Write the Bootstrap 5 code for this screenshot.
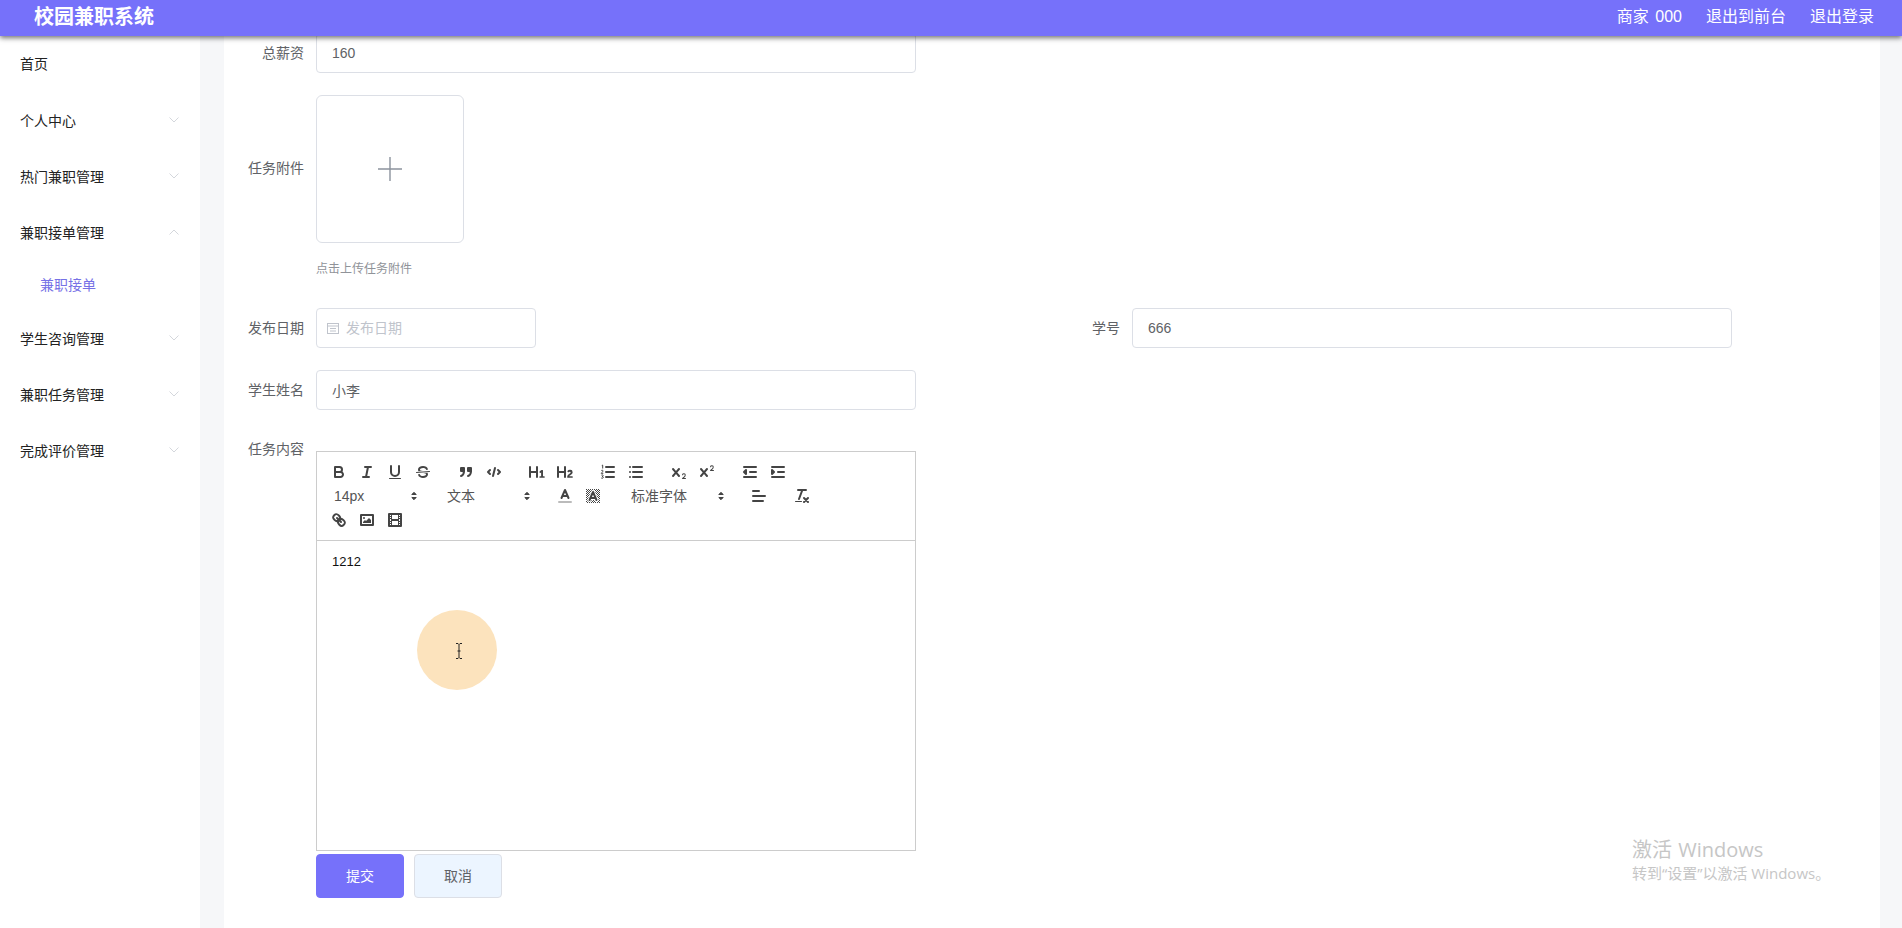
<!DOCTYPE html>
<html lang="zh">
<head>
<meta charset="utf-8">
<title>校园兼职系统</title>
<link href="https://cdn.jsdelivr.net/npm/bootstrap@5.3.0/dist/css/bootstrap.min.css" rel="stylesheet">
<style>
html,body{height:100%;overflow:hidden}
body{font-family:"Liberation Sans","Noto Sans CJK SC",sans-serif;background:#f6f7f9;color:#606266;font-size:14px}
.top-bar{height:36px;background:#7671fa;color:#fff;box-shadow:0 2px 5px rgba(0,0,0,.55);position:relative;z-index:5;padding:0 28px 2px 34px}
.brand-name{font-size:20px;font-weight:700;line-height:1}
.top-links{font-size:16px;gap:24px;line-height:1}
.top-user{word-spacing:2px}
.shell{height:892px}
.side-menu{width:200px;background:#fff;color:#222}
.menu-item{height:56px;padding:1px 0 0 20px;color:#222;font-size:14px}
.menu-home{height:57px;padding-bottom:1px}
.menu-sub{height:50px;padding:0 0 1px 40px;color:#7671e6;font-size:14px}
.menu-chev{width:10px;height:6px;margin:-4px 21px 0 0;fill:none;stroke:#d4d7dc;stroke-width:1}
.work-area{width:1702px;padding:0 22px 0 24px}
.sheet{background:#fff;height:100%;padding:0 12px;overflow:hidden}
.form-stack{margin-top:-3px}
.field{display:flex}
.field-label{width:80px;padding-right:12px;text-align:right;line-height:40px;flex:none;color:#606266;font-size:14px}
.label-tall{line-height:147px}
.field-input.form-control{width:600px;height:40px;border:1px solid #dcdfe6;border-radius:4px;padding:0 15px;font-size:14px;color:#606266;box-shadow:none}
.field-date{width:220px;height:40px;border:1px solid #dcdfe6;border-radius:4px;padding-left:10px;color:#c0c4cc;gap:7px}
.upload-box{width:148px;height:148px;border:1px solid #dcdfe6;border-radius:6px}
.upload-hint{font-size:12px;color:#909399;margin:18px 0 0;line-height:17px}
.gap-up{margin-top:22px}
.gap-date{margin-top:30px}
.gap-name{margin-top:22px}
.gap-ed{margin-top:19px}
.ed-wrap{width:600px;margin-top:22px}
.ed-tools{border:1px solid #ccc;padding:8px;height:90px;display:flex;flex-wrap:wrap;align-content:flex-start}
.ed-group{display:flex;margin-right:15px}
.ed-btn{width:28px;height:24px;padding:3px 5px;display:block;fill:none;stroke:#444;stroke-width:2;stroke-linecap:round;stroke-linejoin:round}
.ed-btn .fl{fill:#444;stroke:none}
.ed-btn .fb{fill:#444}
.ed-btn .th{stroke-width:1}
.ed-btn .halo{stroke:#fff;stroke-width:4}
.ed-pick{height:24px;display:flex;align-items:center;padding-left:9px;justify-content:space-between;color:#555;font-size:14px;font-weight:400;margin-right:15px}
.pick-s{width:98px}
.pick-f{width:108px}
.ed-arrow{width:18px;height:18px;fill:#444;stroke:#444;stroke-width:1;stroke-linejoin:round}
.ed-body{border:1px solid #ccc;border-top:0;height:310px;padding:12px 15px;color:#111;font-size:13px;line-height:18px}
.act-row{margin-left:80px;gap:10px;margin-top:3px}
.act-btn{width:88px;height:44px;border-radius:4px;font-size:14px;padding:0;line-height:42px}
.act-go,.act-go:hover{background:#7671fa;border:1px solid #7671fa;color:#fff}
.act-no,.act-no:hover{background:#ecf5ff;border:1px solid #dcdfe6;color:#606266}
.cursor-halo{position:absolute;left:417px;top:610px;width:80px;height:80px;border-radius:50%;background:#fce3bd;z-index:6}
.cursor-beam{position:absolute;left:455px;top:643px;z-index:7}
.win-mark{position:absolute;left:1632px;top:838px;color:#c6c6c6;z-index:6;font-family:"Open Sans","Noto Sans CJK SC",sans-serif}
.win-a{font-size:20px;line-height:24px;word-spacing:1px}
.win-b{font-size:15px;line-height:22px}
</style>
</head>
<body>
<header class="top-bar d-flex align-items-center justify-content-between">
  <div class="brand-name">校园兼职系统</div>
  <div class="top-links d-flex"><span class="top-user">商家 000</span><span>退出到前台</span><span>退出登录</span></div>
</header>
<div class="shell d-flex">
  <nav class="side-menu flex-shrink-0">
    <div class="menu-item menu-home d-flex align-items-center">首页</div>
    <div class="menu-item d-flex align-items-center justify-content-between"><span>个人中心</span><svg class="menu-chev" viewBox="0 0 10 6"><path d="M.5.5L5 5 9.500.5"/></svg></div>
    <div class="menu-item d-flex align-items-center justify-content-between"><span>热门兼职管理</span><svg class="menu-chev" viewBox="0 0 10 6"><path d="M.5.5L5 5 9.500.5"/></svg></div>
    <div class="menu-item d-flex align-items-center justify-content-between"><span>兼职接单管理</span><svg class="menu-chev" viewBox="0 0 10 6"><path d="M.5 5.500L5 1l4.500 4.500"/></svg></div>
    <div class="menu-sub d-flex align-items-center">兼职接单</div>
    <div class="menu-item d-flex align-items-center justify-content-between"><span>学生咨询管理</span><svg class="menu-chev" viewBox="0 0 10 6"><path d="M.5.5L5 5 9.500.5"/></svg></div>
    <div class="menu-item d-flex align-items-center justify-content-between"><span>兼职任务管理</span><svg class="menu-chev" viewBox="0 0 10 6"><path d="M.5.5L5 5 9.500.5"/></svg></div>
    <div class="menu-item d-flex align-items-center justify-content-between"><span>完成评价管理</span><svg class="menu-chev" viewBox="0 0 10 6"><path d="M.5.5L5 5 9.500.5"/></svg></div>
  </nav>
  <main class="work-area">
    <div class="sheet">
      <form class="form-stack">
        <div class="field"><label class="field-label">总薪资</label><input class="form-control field-input" value="160"></div>
        <div class="field gap-up">
          <label class="field-label label-tall">任务附件</label>
          <div>
            <div class="upload-box d-flex align-items-center justify-content-center">
              <svg width="24" height="24" viewBox="0 0 24 24"><path d="M12 0v24M0 12h24" stroke="#8c939d" stroke-width="1.4"/></svg>
            </div>
            <p class="upload-hint">点击上传任务附件</p>
          </div>
        </div>
        <div class="row g-0 gap-date">
          <div class="col-6 field">
            <label class="field-label">发布日期</label>
            <div class="field-date d-flex align-items-center">
              <svg width="12" height="12" viewBox="0 0 12 12" fill="none" stroke="#c0c4cc"><rect x=".5" y="1.5" width="11" height="10"/><path d="M.5 4h11M3 6.500h6M3 9h6"/></svg>
              <span>发布日期</span>
            </div>
          </div>
          <div class="col-6 field"><label class="field-label">学号</label><input class="form-control field-input" value="666"></div>
        </div>
        <div class="field gap-name"><label class="field-label">学生姓名</label><input class="form-control field-input" value="小李"></div>
        <div class="field gap-ed">
          <label class="field-label">任务内容</label>
          <div class="ed-wrap">
            <div class="ed-tools">
              <div class="ed-group">
                <svg class="ed-btn" viewBox="0 0 18 18"><path d="M5,4H9.5A2.5,2.5,0,0,1,12,6.5v0A2.5,2.5,0,0,1,9.5,9H5V4Z"/><path d="M5,9h5.5A2.5,2.5,0,0,1,13,11.5v0A2.5,2.5,0,0,1,10.5,14H5V9Z"/></svg>
                <svg class="ed-btn" viewBox="0 0 18 18"><path d="M7 4h6M5 14h6M8 14l2-10"/></svg>
                <svg class="ed-btn" viewBox="0 0 18 18"><path d="M5,3V9a4.012,4.012,0,0,0,4,4H9a4.012,4.012,0,0,0,4-4V3"/><rect class="fl" height="1" rx=".5" width="12" x="3" y="15"/></svg>
                <svg class="ed-btn" viewBox="0 0 18 18"><line class="th" x1="15.5" x2="2.5" y1="8.5" y2="9.5"/><path class="fl" d="M9.007,8C6.542,7.791,6,7.519,6,6.5,6,5.792,7.283,5,9,5c1.571,0,2.765.679,2.875,1.309a1,1,0,0,0,1.97-.34C13.567,4.306,11.35,3,9,3,6.2,3,4,4.538,4,6.5a3.2,3.2,0,0,0,.5,1.843Z"/><path class="fl" d="M9.007,10C11.458,10.209,12,10.481,12,11.5c0,.708-1.283,1.5-3,1.5-1.571,0-2.765-.679-2.875-1.309a1,1,0,0,0-1.97.34C4.433,13.694,6.65,15,9,15c2.8,0,5-1.538,5-3.5a3.2,3.2,0,0,0-.5-1.843Z"/></svg>
              </div>
              <div class="ed-group">
                <svg class="ed-btn" viewBox="0 0 18 18"><rect class="fb" height="3" width="3" x="4" y="5"/><rect class="fb" height="3" width="3" x="11" y="5"/><path d="M7,8c0,4.031-3,5-3,5"/><path d="M14,8c0,4.031-3,5-3,5"/></svg>
                <svg class="ed-btn" viewBox="0 0 18 18"><path d="M5 7L3 9l2 2M13 7l2 2-2 2M10 5L8 13"/></svg>
              </div>
              <div class="ed-group">
                <svg class="ed-btn" viewBox="0 0 18 18"><path class="fl" d="M10,4V14a1,1,0,0,1-2,0V10H3v4a1,1,0,0,1-2,0V4A1,1,0,0,1,3,4V8H8V4a1,1,0,0,1,2,0Zm6.06787,9.209H14.98975V7.59863a.54085.54085,0,0,0-.605-.60547h-.62744a1.01119,1.01119,0,0,0-.748.29688L11.645,8.56641a.5435.5435,0,0,0-.022.8584l.28613.30762a.53861.53861,0,0,0,.84717.0332l.09912-.08789a1.2137,1.2137,0,0,0,.2417-.35254h.02246s-.01123.30859-.01123.60547V13.209H12.041a.54085.54085,0,0,0-.605.60547v.43945a.54085.54085,0,0,0,.605.60547h4.02686a.54085.54085,0,0,0,.605-.60547v-.43945A.54085.54085,0,0,0,16.06787,13.209Z"/></svg>
                <svg class="ed-btn" viewBox="0 0 18 18"><path class="fl" d="M16.73975,13.81445v.43945a.54085.54085,0,0,1-.605.60547H11.855a.58392.58392,0,0,1-.64893-.60547V14.0127c0-2.90527,3.39941-3.42187,3.39941-4.55469a.77675.77675,0,0,0-.84717-.78125,1.17684,1.17684,0,0,0-.83594.38477c-.2749.26367-.561.374-.85791.13184l-.4292-.34082c-.30811-.24219-.38525-.51758-.1543-.81445a2.97155,2.97155,0,0,1,2.45361-1.17676,2.45393,2.45393,0,0,1,2.68408,2.40918c0,2.45312-3.1792,2.92676-3.27832,3.93848h2.79443A.54085.54085,0,0,1,16.73975,13.81445ZM9,3A.99974.99974,0,0,0,8,4V8H3V4A1,1,0,0,0,1,4V14a1,1,0,0,0,2,0V10H8v4a1,1,0,0,0,2,0V4A.99974.99974,0,0,0,9,3Z"/></svg>
              </div>
              <div class="ed-group">
                <svg class="ed-btn" viewBox="0 0 18 18"><path d="M7 4h8M7 9h8M7 14h8"/><path class="th" d="M2.8 2.500l.9-.4v3.400M2.200 7.700c.4-.7 2.100-.6 1.900.4-.1.6-1.600 1.500-1.900 2.200h2.100M2.300 12.200c.6-.5 2-.4 1.900.5 0 .5-.5.8-1 .8.6 0 1.200.3 1.100 1-.1.900-1.500 1-2.100.4" stroke-linecap="butt"/></svg>
                <svg class="ed-btn" viewBox="0 0 18 18"><path d="M6 4h9M6 9h9M6 14h9M3 4h0M3 9h0M3 14h0"/></svg>
              </div>
              <div class="ed-group">
                <svg class="ed-btn" viewBox="0 0 18 18"><path class="fl" d="M15.5,15H13.861a3.858,3.858,0,0,0,1.914-2.975,1.8,1.8,0,0,0-1.6-1.751A1.921,1.921,0,0,0,12.021,11.7a0.50013,0.50013,0,1,0,.957.291h0a0.914,0.914,0,0,1,1.053-.725,0.81,0.81,0,0,1,.744.762c0,1.076-1.16971,1.86982-1.93971,2.43082A1.45639,1.45639,0,0,0,12,15.5a0.5,0.5,0,0,0,.5.5h3A0.5,0.5,0,0,0,15.5,15Z"/><path class="fl" d="M9.65,5.241a1,1,0,0,0-1.409.108L6,7.964,3.759,5.349A1,1,0,0,0,2.241,6.649L4.684,9.5,2.241,12.35A1,1,0,0,0,3.759,13.65L6,11.036,8.241,13.65a1,1,0,1,0,1.518-1.3L7.316,9.5,9.759,6.651A1,1,0,0,0,9.65,5.241Z"/></svg>
                <svg class="ed-btn" viewBox="0 0 18 18"><path class="fl" d="M15.5,7H13.861a4.015,4.015,0,0,0,1.914-2.975,1.8,1.8,0,0,0-1.6-1.751A1.922,1.922,0,0,0,12.021,3.7a0.5,0.5,0,1,0,.957.291,0.917,0.917,0,0,1,1.053-.725,0.81,0.81,0,0,1,.744.762c0,1.077-1.164,1.925-1.934,2.486A1.423,1.423,0,0,0,12,7.5a0.5,0.5,0,0,0,.5.5h3A0.5,0.5,0,0,0,15.5,7Z"/><path class="fl" d="M9.651,5.241a1,1,0,0,0-1.41.108L6,7.964,3.759,5.349a1,1,0,1,0-1.519,1.3L4.683,9.5,2.241,12.35a1,1,0,1,0,1.519,1.3L6,11.036,8.241,13.65a1,1,0,0,0,1.519-1.3L7.317,9.5,9.759,6.651A1,1,0,0,0,9.651,5.241Z"/></svg>
              </div>
              <div class="ed-group">
                <svg class="ed-btn" viewBox="0 0 18 18"><path d="M3 14h12M3 4h12M9 9h6"/><path class="fb" d="M5 7v4L3 9z"/></svg>
                <svg class="ed-btn" viewBox="0 0 18 18"><path d="M3 14h12M3 4h12M9 9h6"/><path class="fb" d="M3 7v4l2-2z"/></svg>
              </div>
              <div class="w-100"></div>
              <div class="ed-pick pick-s"><span>14px</span><svg class="ed-arrow" viewBox="0 0 18 18"><path d="M6.800 10.500L9 12.700l2.200-2.200zM6.800 7.500L9 5.300l2.200 2.200z"/></svg></div>
              <div class="ed-pick pick-s"><span>文本</span><svg class="ed-arrow" viewBox="0 0 18 18"><path d="M6.800 10.500L9 12.700l2.200-2.200zM6.800 7.500L9 5.300l2.200 2.200z"/></svg></div>
              <div class="ed-group">
                <svg class="ed-btn" viewBox="0 0 18 18"><path d="M3 15h12" stroke="#bbb"/><path d="M5.500 11L9 3l3.500 8M11.630 9H6.380"/></svg>
                <svg class="ed-btn" viewBox="0 0 18 18"><defs><pattern id="hatch" width="2" height="2" patternUnits="userSpaceOnUse"><path class="fl" d="M0 0h1v1H0zM1 1h1v1H1z"/></pattern></defs><rect x="2" y="2" width="14" height="14" fill="url(#hatch)" stroke="none"/><path class="halo" d="M5.500 13L9 5l3.500 8M11.630 11H6.380"/><path d="M5.500 13L9 5l3.500 8M11.630 11H6.380"/></svg>
              </div>
              <div class="ed-pick pick-f"><span>标准字体</span><svg class="ed-arrow" viewBox="0 0 18 18"><path d="M6.800 10.500L9 12.700l2.200-2.200zM6.800 7.500L9 5.300l2.200 2.200z"/></svg></div>
              <div class="ed-group">
                <svg class="ed-btn" viewBox="0 0 18 18"><path d="M3 9h12M3 14h10M3 4h6"/></svg>
              </div>
              <div class="ed-group">
                <svg class="ed-btn" viewBox="0 0 18 18"><path d="M5 3h8M6 12L9.350 3M11 11l4 4M15 11l-4 4"/><rect class="fl" height="1" rx=".5" width="7" x="2" y="14"/></svg>
              </div>
              <div class="w-100"></div>
              <div class="ed-group">
                <svg class="ed-btn" viewBox="0 0 18 18"><path d="M7 7l4 4"/><path d="M8.9,4.577a3.476,3.476,0,0,1,.36,4.679A3.476,3.476,0,0,1,4.577,8.9C3.185,7.5,2.035,6.4,4.217,4.217S7.5,3.185,8.9,4.577Z"/><path d="M13.423,9.1a3.476,3.476,0,0,0-4.679-.36,3.476,3.476,0,0,0,.36,4.679c1.392,1.392,2.5,2.542,4.679.36S14.815,10.5,13.423,9.1Z"/></svg>
                <svg class="ed-btn" viewBox="0 0 18 18"><rect height="10" width="12" x="3" y="4"/><circle class="fl" cx="6" cy="7" r="1"/><path class="fl" d="M5 12v-1l2-2 1 1 3-3 2 2v3z"/></svg>
                <svg class="ed-btn" viewBox="0 0 18 18"><rect height="12" width="12" x="3" y="3"/><g class="fl"><rect height="12" width="1" x="5" y="3"/><rect height="12" width="1" x="12" y="3"/><rect height="2" width="8" x="5" y="8"/><rect height="1" width="3" x="3" y="5"/><rect height="1" width="3" x="3" y="7"/><rect height="1" width="3" x="3" y="10"/><rect height="1" width="3" x="3" y="12"/><rect height="1" width="3" x="12" y="5"/><rect height="1" width="3" x="12" y="7"/><rect height="1" width="3" x="12" y="10"/><rect height="1" width="3" x="12" y="12"/></g></svg>
              </div>
            </div>
            <div class="ed-body">1212</div>
          </div>
        </div>
        <div class="act-row d-flex">
          <button type="button" class="btn act-btn act-go">提交</button>
          <button type="button" class="btn act-btn act-no">取消</button>
        </div>
      </form>
    </div>
  </main>
</div>
<div class="cursor-halo"></div>
<svg class="cursor-beam" width="8" height="16" viewBox="0 0 8 16" fill="none" stroke="#222"><path d="M1 .5h2l1 1 1-1h2M4 1.500v13M1 15.500h2l1-1 1 1h2M2.500 8h3"/></svg>
<div class="win-mark"><div class="win-a">激活 Windows</div><div class="win-b">转到“设置”以激活 Windows。</div></div>
</body>
</html>
